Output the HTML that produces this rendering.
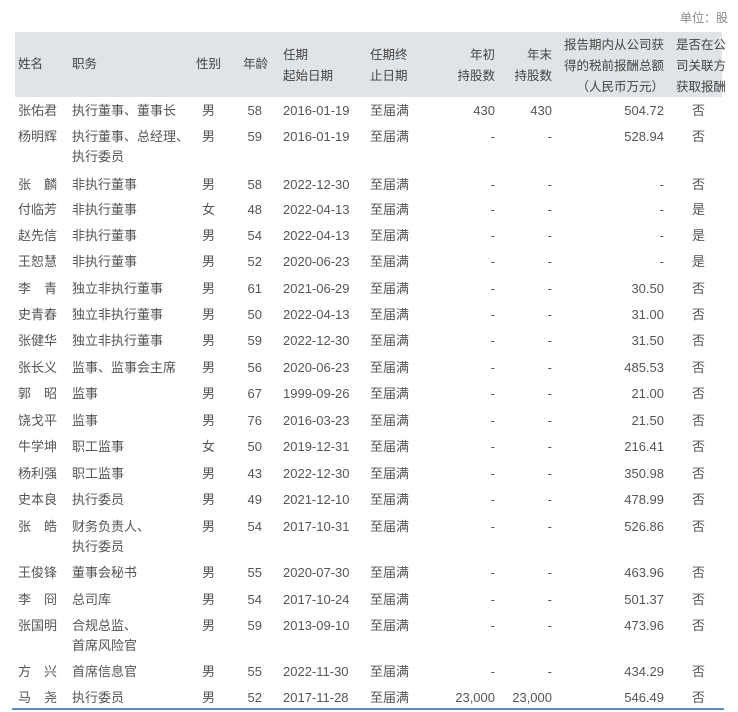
<!DOCTYPE html>
<html><head><meta charset="utf-8"><style>
body{margin:0;width:738px;height:712px;background:#fff;position:relative;overflow:hidden;font-family:"Liberation Sans","Noto Sans CJK SC",sans-serif;font-size:13px;color:#555}
.unit{position:absolute;right:10px;top:9px;font-size:12px;color:#888}
.hd{position:absolute;left:15px;top:32px;width:707px;height:65px;background:#e1e4e7}
.c{position:absolute;white-space:nowrap;line-height:19px}
.h{color:#444;font-size:12.5px}
.bl{position:absolute;left:12px;top:708px;width:712px;height:2px;background:#5a8fbf}
</style></head><body>
<div class="unit">单位：股</div>
<div class="hd"></div>
<div class="c h" style="left:18px;top:55px">姓名</div>
<div class="c h" style="left:72px;top:55px">职务</div>
<div class="c h" style="left:196px;top:55px">性别</div>
<div class="c h" style="left:243px;top:55px">年龄</div>
<div class="c h" style="left:283px;top:45px;line-height:21px">任期<br>起始日期</div>
<div class="c h" style="left:370px;top:45px;line-height:21px">任期终<br>止日期</div>
<div class="c h" style="right:243px;top:45px;line-height:21px;text-align:right">年初<br>持股数</div>
<div class="c h" style="right:186px;top:45px;line-height:21px;text-align:right">年末<br>持股数</div>
<div class="c h" style="right:74px;top:35px;line-height:21px;text-align:right">报告期内从公司获<br>得的税前报酬总额<br>（人民币万元）</div>
<div class="c h" style="left:676px;top:35px;line-height:21px">是否在公<br>司关联方<br>获取报酬</div>
<div id="rows"></div>
<div class="bl"></div>
<script>
var d=[
[111,"张佑君","执行董事、董事长","男","58","2016-01-19","430","430","504.72","否"],
[137,"杨明辉","执行董事、总经理、<br>执行委员","男","59","2016-01-19","-","-","528.94","否"],
[185,"张　麟","非执行董事","男","58","2022-12-30","-","-","-","否"],
[210,"付临芳","非执行董事","女","48","2022-04-13","-","-","-","是"],
[236,"赵先信","非执行董事","男","54","2022-04-13","-","-","-","是"],
[262,"王恕慧","非执行董事","男","52","2020-06-23","-","-","-","是"],
[289,"李　青","独立非执行董事","男","61","2021-06-29","-","-","30.50","否"],
[315,"史青春","独立非执行董事","男","50","2022-04-13","-","-","31.00","否"],
[341,"张健华","独立非执行董事","男","59","2022-12-30","-","-","31.50","否"],
[368,"张长义","监事、监事会主席","男","56","2020-06-23","-","-","485.53","否"],
[394,"郭　昭","监事","男","67","1999-09-26","-","-","21.00","否"],
[421,"饶戈平","监事","男","76","2016-03-23","-","-","21.50","否"],
[447,"牛学坤","职工监事","女","50","2019-12-31","-","-","216.41","否"],
[474,"杨利强","职工监事","男","43","2022-12-30","-","-","350.98","否"],
[500,"史本良","执行委员","男","49","2021-12-10","-","-","478.99","否"],
[527,"张　皓","财务负责人、<br>执行委员","男","54","2017-10-31","-","-","526.86","否"],
[573,"王俊锋","董事会秘书","男","55","2020-07-30","-","-","463.96","否"],
[600,"李　冏","总司库","男","54","2017-10-24","-","-","501.37","否"],
[626,"张国明","合规总监、<br>首席风险官","男","59","2013-09-10","-","-","473.96","否"],
[672,"方　兴","首席信息官","男","55","2022-11-30","-","-","434.29","否"],
[698,"马　尧","执行委员","男","52","2017-11-28","23,000","23,000","546.49","否"]];
var h="";d.forEach(function(r){var t=r[0]-10;
h+='<div class="c" style="left:18px;top:'+t+'px">'+r[1]+'</div>';
h+='<div class="c" style="left:72px;top:'+t+'px;line-height:20px">'+r[2]+'</div>';
h+='<div class="c" style="left:202px;top:'+t+'px">'+r[3]+'</div>';
h+='<div class="c" style="right:476px;top:'+t+'px">'+r[4]+'</div>';
h+='<div class="c" style="left:283px;top:'+t+'px">'+r[5]+'</div>';
h+='<div class="c" style="left:370px;top:'+t+'px">至届满</div>';
h+='<div class="c" style="right:243px;top:'+t+'px">'+r[6]+'</div>';
h+='<div class="c" style="right:186px;top:'+t+'px">'+r[7]+'</div>';
h+='<div class="c" style="right:74px;top:'+t+'px">'+r[8]+'</div>';
h+='<div class="c" style="left:692px;top:'+t+'px">'+r[9]+'</div>';});
document.getElementById("rows").innerHTML=h;
</script>
</body></html>
